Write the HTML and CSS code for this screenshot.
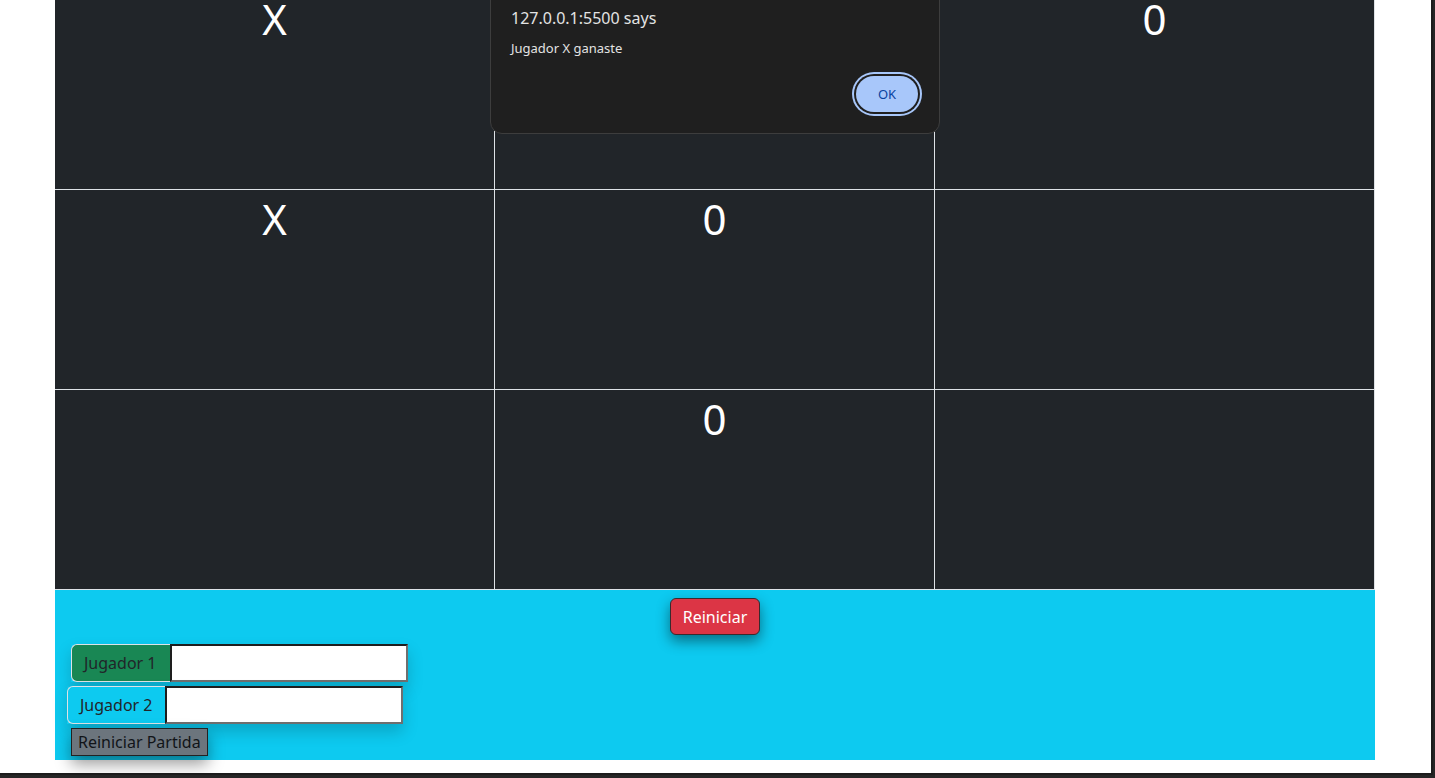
FILE: index.html
```html
<!DOCTYPE html>
<html lang="es">
<head>
<meta charset="utf-8">
<title>Tres en raya</title>
<link rel="stylesheet" href="styles.css">
</head>
<body>
<div class="window">
  <div class="container">
    <div class="board">
      <div class="cell">X</div>
      <div class="cell"></div>
      <div class="cell">0</div>
      <div class="cell">X</div>
      <div class="cell">0</div>
      <div class="cell"></div>
      <div class="cell"></div>
      <div class="cell">0</div>
      <div class="cell"></div>
    </div>
    <div class="panel">
      <button class="restart">Reiniciar</button>
      <div class="group group-one">
        <span class="label label-green">Jugador 1</span>
        <input class="name" type="text">
      </div>
      <div class="group group-two">
        <span class="label label-cyan">Jugador 2</span>
        <input class="name" type="text">
      </div>
      <button class="reset-match">Reiniciar Partida</button>
    </div>
  </div>
  <div class="dialog">
    <div class="dialog-title">127.0.0.1:5500 says</div>
    <div class="dialog-msg">Jugador X ganaste</div>
    <button class="dialog-ok">OK</button>
  </div>
</div>
</body>
</html>
```

FILE: styles.css
```css
html, body {
  margin: 0;
  padding: 0;
}
body {
  background: #262626;
  font-family: "Noto Sans", "Open Sans", sans-serif;
  width: 1435px;
  height: 778px;
  overflow: hidden;
}
.window {
  position: relative;
  width: 1431px;
  height: 773px;
  background: #ffffff;
  overflow: hidden;
  border-right: 2px solid #1c1c1c;
  border-bottom: 2px solid #1c1c1c;
}
.container {
  width: 1320px;
  margin-left: 55px;
}
.board {
  display: grid;
  grid-template-columns: 440px 440px 440px;
  grid-template-rows: 200px 200px 200px;
  margin-top: -10px;
}
.cell {
  box-sizing: border-box;
  background: #212529;
  color: #ffffff;
  border-right: 1px solid #dee2e6;
  border-bottom: 1px solid #dee2e6;
  text-align: center;
  font-size: 42px;
  line-height: 1.2;
  padding-top: 4px;
}
.panel {
  background: #0dcaf0;
  padding: 8px 0 4px;
  display: flex;
  flex-direction: column;
  align-items: flex-start;
}
.restart {
  align-self: center;
  font-family: inherit;
  font-size: 16px;
  line-height: 24px;
  height: 37px;
  padding: 5px 12px;
  border: 1px solid #3a2a2e;
  border-radius: 6px;
  background: #dc3545;
  color: #ffffff;
  box-shadow: 0 6px 14px rgba(0, 0, 0, 0.45);
}
.group {
  display: flex;
  height: 38px;
  box-shadow: 0 8px 16px rgba(0, 0, 0, 0.18);
}
.group-one {
  margin: 9px 0 0 16px;
}
.group-two {
  margin: 4px 0 0 12px;
}
.label {
  box-sizing: border-box;
  height: 38px;
  padding: 6px 12px;
  font-size: 16px;
  line-height: 24px;
  color: #212529;
  border: 1px solid #dee2e6;
  border-right: none;
  border-radius: 6px 0 0 6px;
}
.label-green {
  background: #198754;
  width: 99px;
}
.label-cyan {
  background: #0dcaf0;
  width: 98px;
}
.name {
  box-sizing: border-box;
  width: 238px;
  height: 38px;
  margin: 0;
  background: #ffffff;
  border-style: solid;
  border-width: 2px;
  border-color: #1e1e1e #6f6f6f #6f6f6f #1e1e1e;
  padding: 1px 2px;
}
.reset-match {
  margin: 4px 0 0 16px;
  box-sizing: border-box;
  height: 28px;
  padding: 0 6px;
  font-family: inherit;
  font-size: 16px;
  line-height: 24px;
  color: #111418;
  background: #6c757d;
  border: 1px solid #222222;
  border-radius: 0;
  box-shadow: 0 8px 16px rgba(0, 0, 0, 0.4);
}
.dialog {
  position: absolute;
  left: 490px;
  top: -20px;
  width: 450px;
  height: 154px;
  box-sizing: border-box;
  background: #1f1f1f;
  border: 1px solid #3d3d3d;
  border-radius: 12px;
  padding: 27px 21px 0 20px;
  display: flex;
  flex-direction: column;
  color: #e3e3e3;
}
.dialog-title {
  font-size: 16px;
  line-height: 20px;
}
.dialog-msg {
  font-size: 13px;
  line-height: 16px;
  margin-top: 12px;
}
.dialog-ok {
  align-self: flex-end;
  margin-top: 20px;
  width: 62px;
  height: 36px;
  border: none;
  border-radius: 18px;
  background: #a8c7fa;
  color: #0842a0;
  font-family: inherit;
  font-size: 13px;
  box-shadow: 0 0 0 2px #1f1f1f, 0 0 0 4px #a8c7fa;
}
```
